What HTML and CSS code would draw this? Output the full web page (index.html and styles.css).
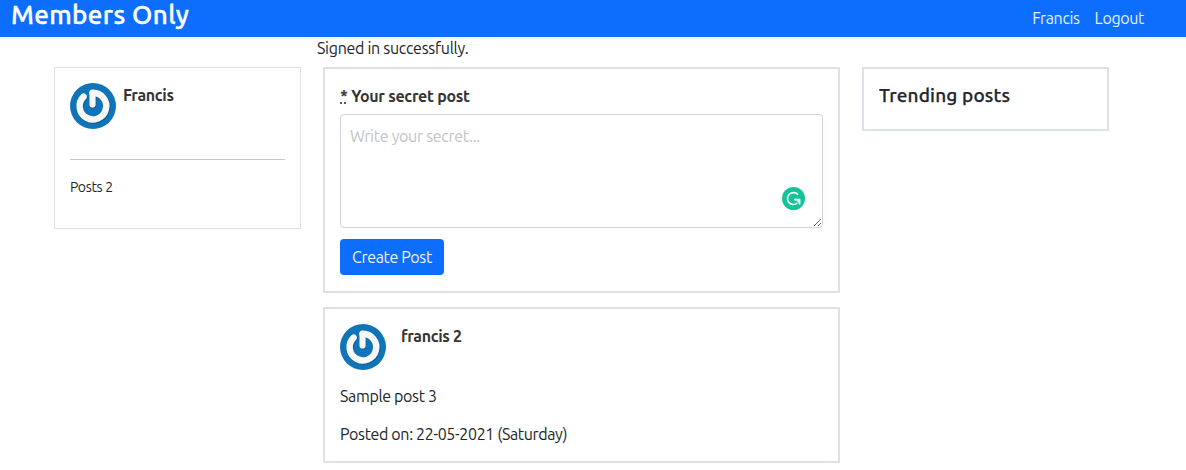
FILE: index.html
```html
<!DOCTYPE html>
<html lang="en">
<head>
<meta charset="utf-8">
<title>Members Only</title>
<link rel="stylesheet" href="styles.css">
</head>
<body>
<svg width="0" height="0" class="defs" aria-hidden="true">
  <defs>
    <filter id="soft" x="-20%" y="-20%" width="140%" height="140%"><feDropShadow dx="0.6" dy="1" stdDeviation="0.7" flood-color="#003d66" flood-opacity=".6"/></filter>
    <symbol id="power" viewBox="0 0 46 46">
      <circle cx="23" cy="23" r="23" fill="#0f75b8"/>
      <g fill="none" stroke="#f7f7f7" stroke-linecap="round" stroke-linejoin="round" filter="url(#soft)">
        <path d="M13.6 13.6A13.3 13.3 0 1 0 22.5 9.8" stroke-width="6.4"/>
        <path d="M22.5 10V21.5" stroke-width="6"/>
      </g>
    </symbol>
  </defs>
</svg>
<header class="navbar">
  <h1 class="brand"><span>Members Only</span></h1>
  <nav class="links"><a class="link-user">Francis</a><a class="link-logout">Logout</a></nav>
</header>
<p class="notice"><span>Signed in successfully.</span></p>
<main class="columns">
  <aside class="card profile">
    <div class="person"><svg class="avatar"><use href="#power"/></svg><b class="user-name">Francis</b></div>
    <hr class="rule">
    <p class="count">Posts 2</p>
  </aside>
  <section class="feed">
    <form class="card composer">
      <label class="label" for="post"><abbr title="required">*</abbr> Your secret post</label>
      <div class="field">
        <textarea id="post" class="input" placeholder="Write your secret..."></textarea>
        <svg class="assistant" viewBox="0 0 24 24"><circle cx="12" cy="12" r="12" fill="#15c39a"/><path d="M16.8 8.2A6.2 6.2 0 1 0 16 16.7" fill="none" stroke="#fff" stroke-width="1.7"/><path d="M12.7 13.2H18.3V18.2" fill="none" stroke="#fff" stroke-width="1.8"/><path d="M15 14H18V17Z" fill="#fff"/></svg>
      </div>
      <button type="button" class="button">Create Post</button>
    </form>
    <article class="card post">
      <div class="person author"><svg class="avatar"><use href="#power"/></svg><b class="author-name">francis 2</b></div>
      <p class="text">Sample post 3</p>
      <p class="date">Posted on: 22-05-2021 (Saturday)</p>
    </article>
  </section>
  <aside class="card trending"><h2 class="heading">Trending posts</h2></aside>
</main>
</body>
</html>
```
FILE: styles.css
```css
* { box-sizing: border-box; }
body { margin: 0; background: #fff; color: #212529; font: 16px/23px "Ubuntu", "Noto Sans", sans-serif; letter-spacing: -.35px; overflow: hidden; }
p, h1, h2 { margin: 0; }
.defs { position: absolute; }
.navbar { height: 37px; background: #0d6efd; color: #fff; display: flex; justify-content: space-between; padding: 0 42px 0 11px; }
.brand { font-size: 26px; line-height: 29px; font-weight: 500; letter-spacing: .4px; -webkit-text-stroke: .4px; }
.links { display: flex; gap: 15px; padding-top: 7px; color: #e3eeff; }
.notice { height: 30px; padding-left: 317px; letter-spacing: -.28px; }
.columns { display: flex; align-items: flex-start; gap: 22px; padding-left: 54px; }
.card { border: 2px solid #dee2e6; }
.profile { width: 247px; height: 162px; border: 1px solid #dfe1e4; padding: 15px; }
.person { display: flex; gap: 7px; height: 46px; }
.avatar { width: 46px; height: 46px; flex: none; }
.user-name, .author-name { color: #343434; padding-top: 1px; }
.rule { margin: 30px 0 16px; border: 0; border-top: 1px solid #c8c9ca; }
.count { font-size: 14px; letter-spacing: -.35px; }
.feed { width: 517px; display: flex; flex-direction: column; gap: 14px; }
.composer { height: 226px; padding: 15px; }
.label { display: block; height: 30px; padding-top: 1px; font-weight: 700; letter-spacing: -.28px; color: #343434; }
.field { position: relative; height: 114px; margin-bottom: 11px; }
.input { display: block; width: 483px; height: 114px; border: 1px solid #ced4da; border-radius: 4px; padding: 10px 9px; font: inherit; letter-spacing: -.28px; resize: both; }
.input::placeholder { color: #c2c4c6; opacity: 1; }
.assistant { position: absolute; left: 442px; top: 73px; width: 23px; height: 23px; }
.button { display: block; width: 104px; height: 36px; border: 0; border-radius: 4px; background: #0d6efd; color: #eef5ff; font: inherit; letter-spacing: inherit; padding: 0; white-space: nowrap; }
.post { height: 156px; padding: 15px; }
.author { gap: 15px; margin-bottom: 15px; }
.text { margin-bottom: 15px; }
.trending { width: 247px; height: 64px; padding: 14px 15px; }
.heading { font-size: 19px; line-height: 24px; font-weight: 500; letter-spacing: .15px; -webkit-text-stroke: .25px; }
```
